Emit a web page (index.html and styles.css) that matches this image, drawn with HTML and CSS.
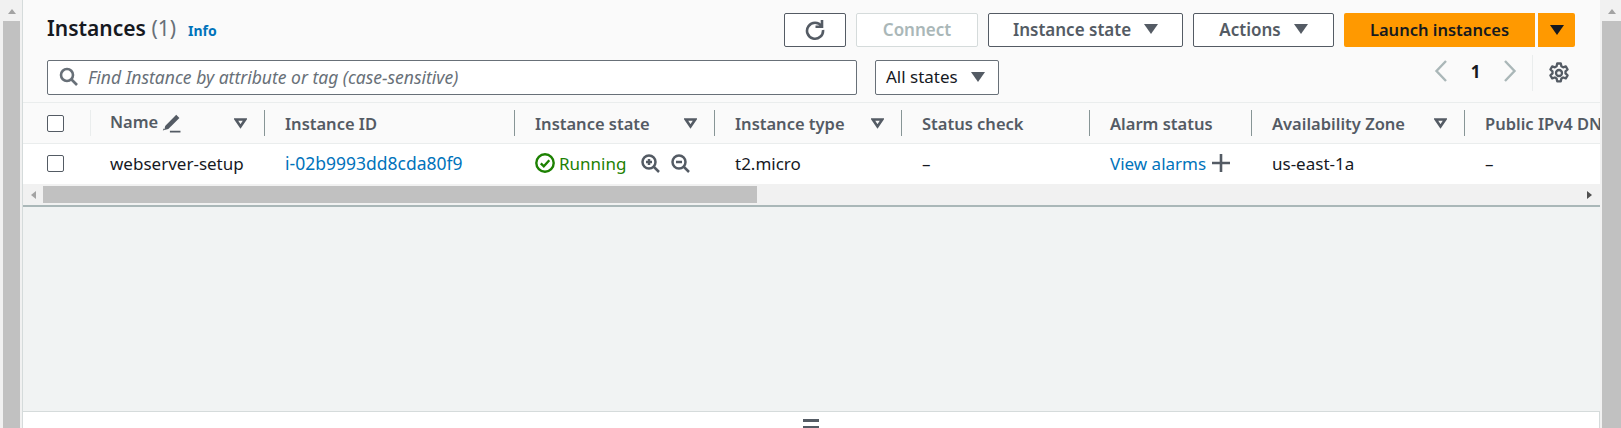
FILE: index.html
```html
<!DOCTYPE html>
<html lang="en">
<head>
<meta charset="utf-8">
<title>Instances</title>
<link rel="stylesheet" href="styles.css">
</head>
<body>
<div class="page">
  <div class="vbar vbar-left"><span class="arrow-up"></span><span class="vthumb"></span></div>
  <main class="main">
    <section class="panel">
      <header class="head">
        <div class="row-top">
          <h1 class="title">Instances <span class="count">(1)</span></h1>
          <a class="info">Info</a>
          <div class="actions">
            <button class="btn btn-icon"><svg width="22" height="22" viewBox="0 0 22 22" fill="none" stroke="#545b64" stroke-width="2.6"><path d="M17.6 7.2A8 8 0 1 0 19 11"/><path d="M18 1V7.800H11.500"/></svg></button>
            <button class="btn btn-connect">Connect</button>
            <button class="btn btn-state">Instance state<i class="caret"></i></button>
            <button class="btn btn-actions">Actions<i class="caret"></i></button>
            <div class="launch">
              <button class="btn-primary btn-launch">Launch instances</button>
              <button class="btn-primary btn-drop"><i class="caret caret-dark"></i></button>
            </div>
          </div>
        </div>
        <div class="row-filter">
          <div class="search">
            <svg width="19" height="19" viewBox="0 0 19 19" fill="none" stroke="#687078" stroke-width="2.6"><circle cx="8" cy="8" r="6"/><path d="M12.500 12.500L18 18"/></svg>
            <span class="placeholder">Find Instance by attribute or tag (case-sensitive)</span>
          </div>
          <div class="select">All states<i class="caret"></i></div>
          <div class="pager">
            <svg class="chev" width="14" height="24" viewBox="0 0 14 24" fill="none" stroke="#aab7b8" stroke-width="2.400"><path d="M12 2L2.500 12l9.500 10"/></svg>
            <b class="page-num">1</b>
            <svg class="chev" width="14" height="24" viewBox="0 0 14 24" fill="none" stroke="#aab7b8" stroke-width="2.400"><path d="M2 2l9.500 10L2 22"/></svg>
            <span class="gear-wrap"><svg width="22" height="22" viewBox="0 0 22 22" fill="none" stroke="#545b64" stroke-width="2.300" stroke-linejoin="round"><path d="M9.200 1.500h3.600l.6 2.800 1.700 1 2.700-.9 1.800 3.100-2.100 1.900v2l2.100 1.900-1.800 3.100-2.700-.9-1.700 1-.6 2.800H9.200l-.6-2.800-1.700-1-2.700.9-1.800-3.100 2.100-1.900v-2L2.400 7.500l1.800-3.100 2.700.9 1.700-1z"/><circle cx="11" cy="11" r="3"/></svg></span>
          </div>
        </div>
      </header>
      <div class="table">
        <div class="tr th">
          <div class="c c-check"><span class="box"></span></div>
          <div class="c c-name"><span class="name-label">Name</span><svg class="pencil" width="19" height="19" viewBox="0 0 18 18" fill="#545b64"><path d="M13.500 0.800l3 3L6 14.300l-3.800.9.800-3.900z"/><path d="M7.500 15.800h10v1.700h-10zM0.800 15.600l2.200-.6-1.500-1.300z"/></svg><svg class="sort" width="13" height="11" viewBox="0 0 13 11" fill="none" stroke="#545b64" stroke-width="2.600"><path d="M1.800 1.500h9.400L6.500 8.500z"/></svg></div>
          <div class="c c-id">Instance ID</div>
          <div class="c c-state">Instance state<svg class="sort" width="13" height="11" viewBox="0 0 13 11" fill="none" stroke="#545b64" stroke-width="2.600"><path d="M1.800 1.500h9.400L6.500 8.500z"/></svg></div>
          <div class="c c-type">Instance type<svg class="sort" width="13" height="11" viewBox="0 0 13 11" fill="none" stroke="#545b64" stroke-width="2.600"><path d="M1.800 1.500h9.400L6.500 8.500z"/></svg></div>
          <div class="c c-status">Status check</div>
          <div class="c c-alarm">Alarm status</div>
          <div class="c c-az">Availability Zone<svg class="sort" width="13" height="11" viewBox="0 0 13 11" fill="none" stroke="#545b64" stroke-width="2.600"><path d="M1.800 1.500h9.400L6.500 8.500z"/></svg></div>
          <div class="c c-dns">Public IPv4 DNS</div>
        </div>
        <div class="tr td">
          <div class="c c-check"><span class="box"></span></div>
          <div class="c c-name">webserver-setup</div>
          <div class="c c-id"><a class="link link-id">i-02b9993dd8cda80f9</a></div>
          <div class="c c-state">
            <svg class="ok" width="20" height="20" viewBox="0 0 20 20" fill="none" stroke="#1d8102" stroke-width="2.400"><circle cx="10" cy="10" r="8.700"/><path d="M5.800 10.300l3 3 5.500-6"/></svg>
            <span class="running">Running</span>
            <svg class="zoom" width="19" height="19" viewBox="0 0 19 19" fill="none" stroke="#545b64" stroke-width="2.500"><circle cx="8" cy="8" r="6.500"/><path d="M13 13l5 5"/><path d="M5 8h6M8 5v6"/></svg>
            <svg class="zoom" width="19" height="19" viewBox="0 0 19 19" fill="none" stroke="#545b64" stroke-width="2.500"><circle cx="8" cy="8" r="6.500"/><path d="M13 13l5 5"/><path d="M5 8h6"/></svg>
          </div>
          <div class="c c-type">t2.micro</div>
          <div class="c c-status">–</div>
          <div class="c c-alarm"><a class="link">View alarms</a><svg class="plus" width="18" height="18" viewBox="0 0 18 18" stroke="#545b64" stroke-width="2.600"><path d="M0 9h18M9 0v18"/></svg></div>
          <div class="c c-az">us-east-1a</div>
          <div class="c c-dns">–</div>
        </div>
      </div>
      <div class="hbar">
        <span class="arrow-left"></span>
        <span class="hthumb"></span>
        <span class="arrow-right"></span>
      </div>
    </section>
    <div class="empty"></div>
    <section class="lower"><span class="handle"></span></section>
  </main>
  <div class="vbar vbar-right"><span class="arrow-up"></span><span class="vthumb"></span></div>
</div>
</body>
</html>
```
FILE: styles.css
```css
* { box-sizing: border-box; }
html, body { margin: 0; height: 100%; overflow: hidden; }
body { font-family: "Noto Sans", sans-serif; font-size: 17px; color: #16191f; background: #f1f3f3; }
.page { display: flex; width: 1621px; height: 428px; }

.vbar { background: #f1f1f1; display: flex; flex-direction: column; align-items: center; }
.vbar-left { width: 23px; padding: 0 2px 0 3px; border-right: 1px solid #d5dbdb; flex: none; }
.vbar-right { width: 21px; padding-left: 2px; flex: none; }
.arrow-up { width: 0; height: 0; margin: 9px 0 7px; border: 4px solid transparent; border-top: 0; border-bottom: 5px solid #a3a3a3; }
.vthumb { flex: 1; width: 100%; background: #c1c1c1; }

.main { flex: 1; min-width: 0; display: flex; flex-direction: column; background: #f1f3f3; }
.panel { background: #fff; flex: none; }
.head { height: 103px; background: #fafafa; border-bottom: 1px solid #eaeded; padding: 13px 25px 0 24px; }
.row-top { display: flex; height: 34px; align-items: flex-start; }
.title { margin: 0; font-size: 21px; line-height: 30px; font-weight: 600; color: #16191f; }
.count { font-weight: 400; color: #687078; }
.info { font-size: 14px; font-weight: 700; color: #0073bb; margin: 8px 0 0 12px; }
.actions { margin-left: auto; display: flex; gap: 10px; }
.btn { height: 34px; padding: 0 0 2px; background: #fff; border: 1px solid #545b64; border-radius: 2px; font: 600 17px "Noto Sans", sans-serif; color: #545b64; display: flex; align-items: center; justify-content: center; }
.btn-icon { width: 62px; padding: 0; }
.btn-connect { width: 122px; border-color: #d5dbdb; color: #aab7b8; }
.btn-state { width: 195px; }
.btn-actions { width: 141px; }
.caret { display: inline-block; width: 0; height: 0; margin-left: 13px; border: 7px solid transparent; border-top: 10px solid #545b64; border-bottom: 0; }
.caret-dark { margin: 0; border-top-color: #16191f; }
.launch { display: flex; gap: 3px; }
.btn-primary { height: 34px; padding: 0 0 2px; background: #ff9900; border: 0; font: 600 16.5px "Noto Sans", sans-serif; color: #16191f; display: flex; align-items: center; justify-content: center; }
.btn-launch { width: 191px; border-radius: 2px 0 0 2px; }
.btn-drop { width: 37px; padding: 0; border-radius: 0 2px 2px 0; }

.row-filter { display: flex; align-items: flex-start; margin-top: 13px; }
.search { width: 810px; height: 35px; background: #fff; border: 1px solid #687078; border-radius: 2px; display: flex; align-items: center; gap: 10px; padding: 0 0 2px 11px; }
.placeholder { font-style: italic; font-size: 17.5px; color: #687078; }
.select { margin-left: 18px; width: 124px; height: 35px; background: #fff; border: 1px solid #687078; border-radius: 2px; display: flex; align-items: center; padding: 0 0 2px 10px; color: #16191f; }
.select .caret { margin-left: 13px; }
.pager { margin-left: auto; display: flex; align-items: center; height: 22px; margin-right: 5px; }
.chev { flex: none; }
.page-num { width: 55px; text-align: center; font-weight: 700; font-size: 17px; }
.gear-wrap { margin-left: 15px; padding-left: 15px; height: 36px; border-left: 1px solid #eaeded; display: flex; align-items: center; margin-top: 4px; }

.table { overflow: hidden; }
.tr { display: grid; grid-template-columns: 67px 174px 250px 200px 187px 188px 162px 213px 300px; width: 1741px; align-items: center; }
.th { height: 41px; background: #fafafa; border-bottom: 1px solid #eaeded; font-weight: 600; font-size: 16.5px; color: #545b64; }
.td { height: 40px; background: #fff; padding-bottom: 2px; }
.c { display: flex; align-items: center; height: 26px; padding-left: 20px; white-space: nowrap; }
.th .c { border-left: 1px solid #879596; }
.th .c-check { border-left: 0; padding-left: 24px; }
.th .c-name { border-left: 1px solid #eaeded; }
.c-name { padding-left: 19px; }
.td .c { border-left: 1px solid transparent; }
.td .c-check { border-left: 0; padding-left: 24px; }
.box { width: 17px; height: 17px; border: 1px solid #545b64; border-radius: 2px; background: #fff; }
.sort { margin-left: auto; margin-right: 17px; }
.name-label { margin-top: -3px; }
.pencil { margin-left: 4px; }
.link { color: #0073bb; }
.link-id { font-size: 17.5px; }
.ok { margin-right: 4px; flex: none; }
.running { color: #1d8102; margin-right: 15px; }
.zoom { margin-right: 11px; flex: none; }
.plus { margin-left: 6px; flex: none; }

.hbar { height: 23px; background: #f1f1f1; border-bottom: 2px solid #aab7b8; display: flex; align-items: center; padding: 0 8px 0 8px; }
.arrow-left { width: 0; height: 0; border: 4px solid transparent; border-left: 0; border-right: 5px solid #a3a3a3; }
.arrow-right { width: 0; height: 0; margin-left: auto; border: 4px solid transparent; border-right: 0; border-left: 5px solid #505050; }
.hthumb { margin-left: 7px; width: 714px; height: 17px; background: #c1c1c1; }

.empty { flex: 1; background: #f1f3f3; }
.lower { height: 17px; flex: none; background: #fff; border-top: 1px solid #d5dbdb; border-right: 1px solid #d5dbdb; display: flex; justify-content: center; }
.handle { width: 16px; height: 10px; margin-top: 7px; border-top: 3px solid #545b64; border-bottom: 3px solid #545b64; }
```
